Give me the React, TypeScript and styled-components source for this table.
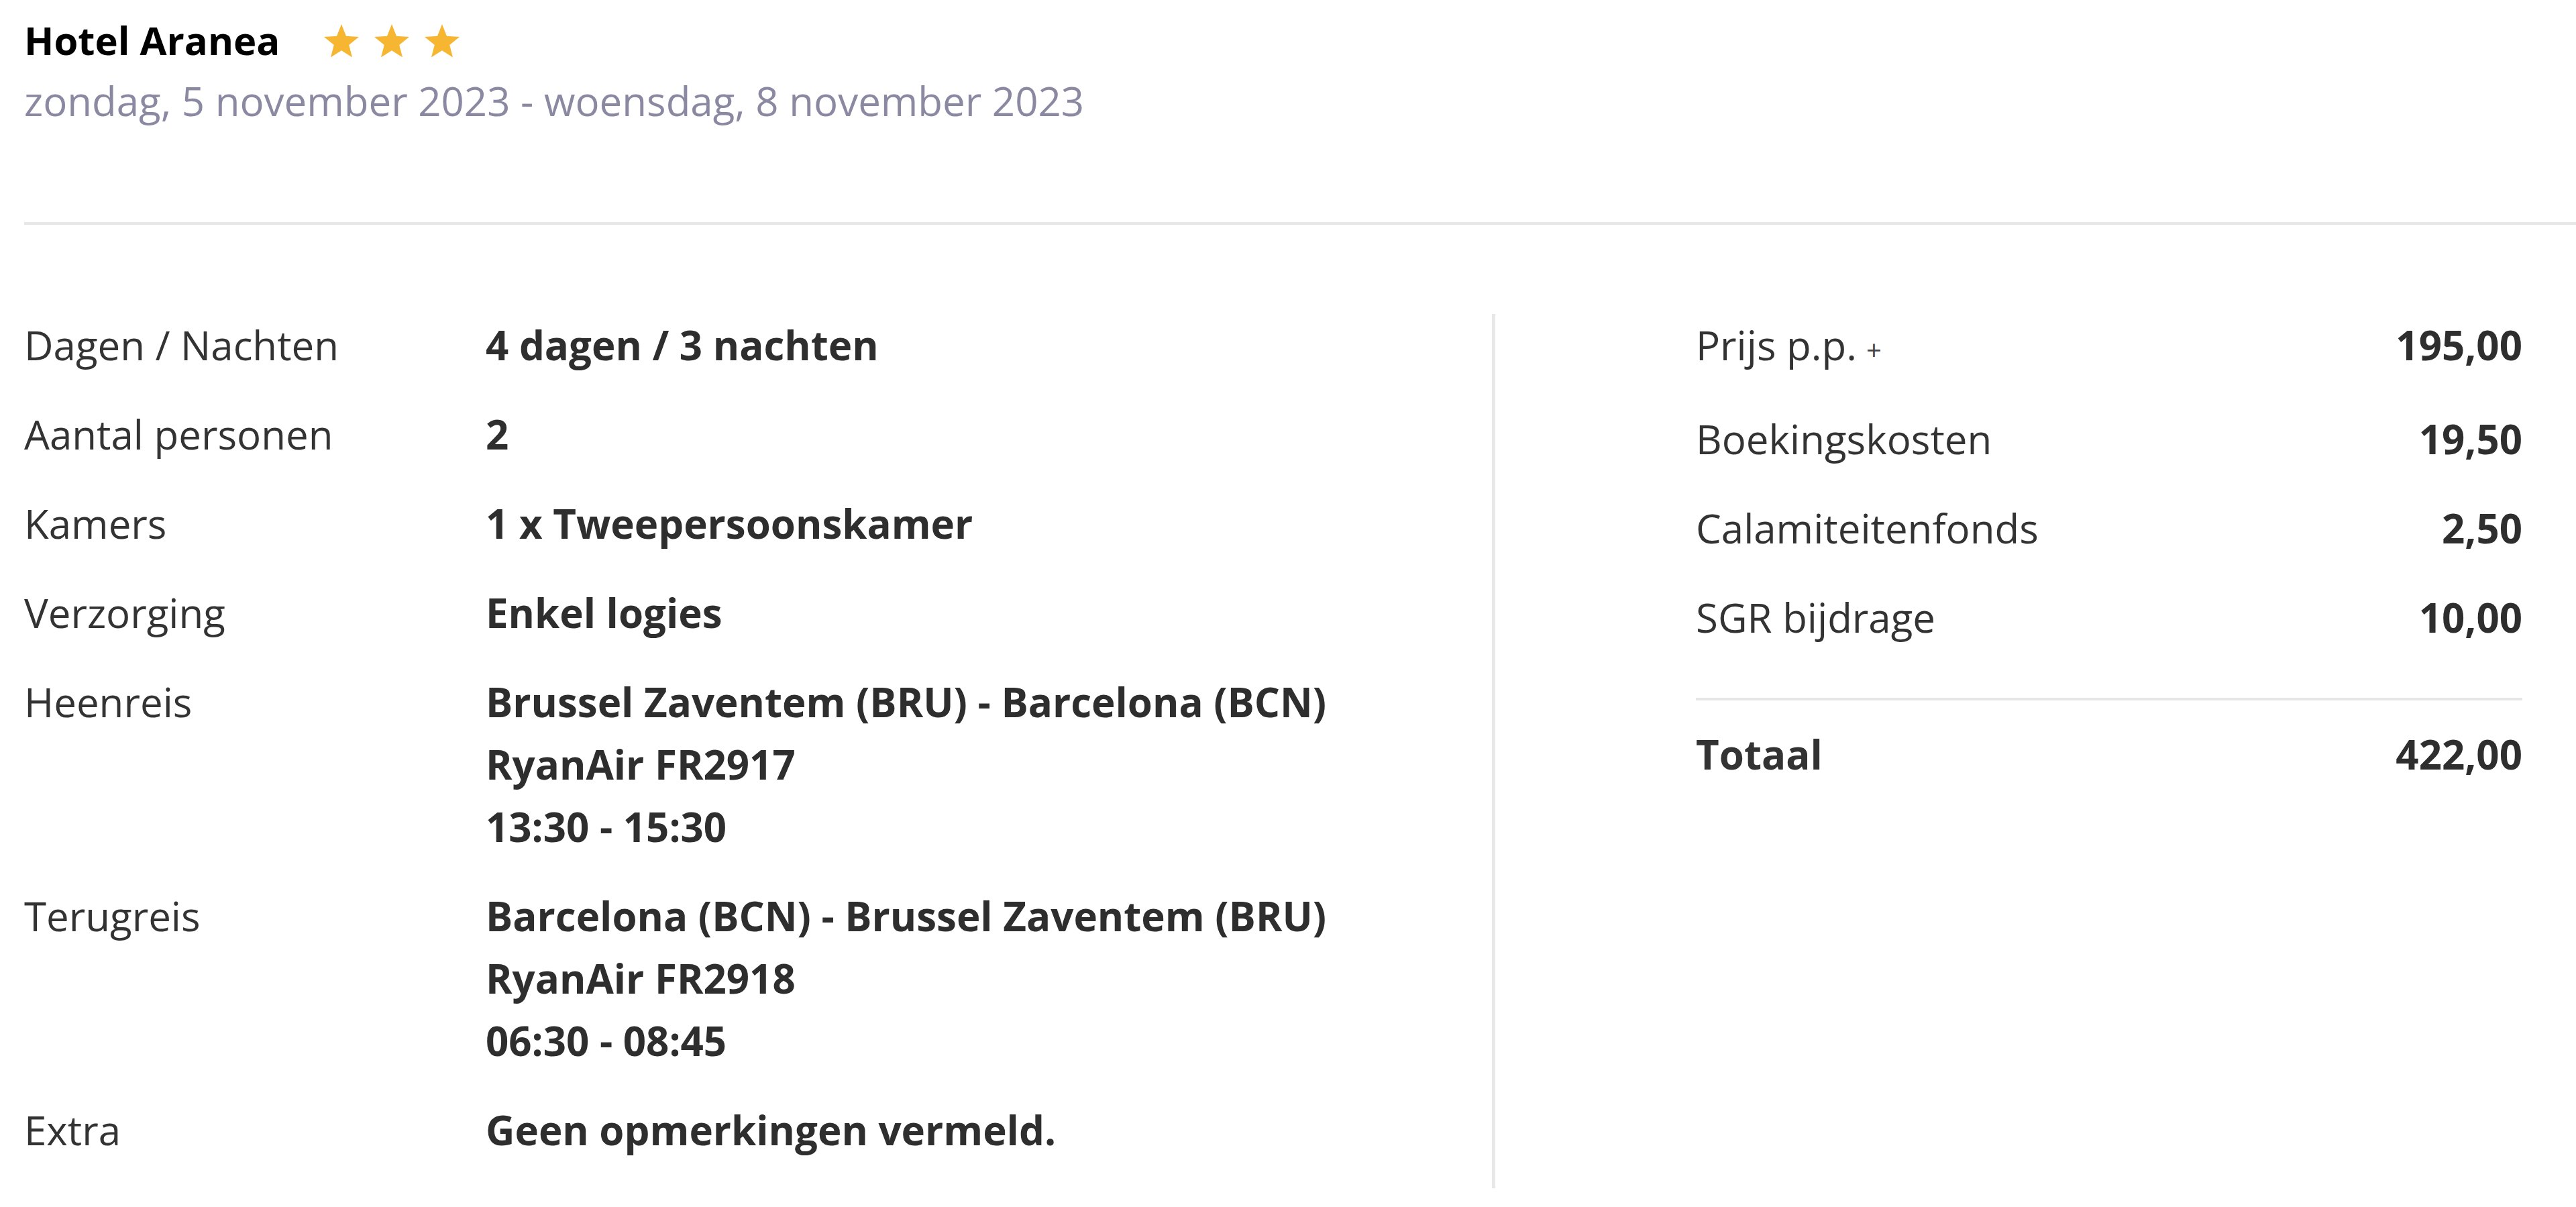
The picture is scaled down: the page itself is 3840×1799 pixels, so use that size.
import React from 'react';
import styled, { createGlobalStyle } from 'styled-components';

const Global = createGlobalStyle`
  html, body { margin: 0; padding: 0; background: #ffffff; }
  body {
    font-family: "Open Sans", "Noto Sans", sans-serif;
    color: #333333;
    -webkit-font-smoothing: antialiased;
  }
`;

const Page = styled.div`
  padding: 15px 0 31px 0;
`;

const Header = styled.header`
  padding-left: 36px;
`;

const TitleRow = styled.div`
  display: flex;
  align-items: center;
`;

const Title = styled.h1`
  margin: 0;
  font-size: 58px;
  line-height: 90px;
  font-weight: 700;
  color: #000000;
`;

const Stars = styled.div`
  display: flex;
  gap: 23px;
  margin-left: 66px;
`;

const StarSvg = styled.svg`
  width: 52px;
  height: 49px;
  display: block;
`;

const DateLine = styled.div`
  font-size: 60px;
  line-height: 90px;
  color: #8b89a1;
`;

const Rule = styled.hr`
  margin: 136px 0 133px 36px;
  border: 0;
  height: 4px;
  background: #e6e6e6;
`;

const Body = styled.div`
  display: grid;
  grid-template-columns: 2193px 1fr;
  margin: 0 80px 0 36px;
`;

const Details = styled.div`
  border-right: 5px solid #e8e8e8;
`;

const DetailRow = styled.div`
  display: grid;
  grid-template-columns: 688px 1fr;
  padding-bottom: 40px;
  font-size: 60px;
  line-height: 93px;
`;

const Label = styled.div`
  font-weight: 400;
  color: #333333;
`;

const Value = styled.div`
  font-weight: 700;
  color: #2e2e2e;
`;

const Summary = styled.div`
  padding-left: 299px;
`;

const PriceRow = styled.div<{ $total?: boolean }>`
  display: flex;
  justify-content: space-between;
  align-items: baseline;
  font-size: 60px;
  line-height: 93px;
  margin-bottom: 40px;
  font-weight: ${(p) => (p.$total ? 700 : 400)};
  color: #333333;
  &:last-of-type { margin-bottom: 0; }
`;

const Amount = styled.span`
  font-weight: 700;
  color: #2e2e2e;
`;

const Plus = styled.span`
  font-size: 40px;
  margin-left: 14px;
  color: #444444;
`;

const TotalRule = styled.hr`
  margin: 73px 0 34px 0;
  border: 0;
  height: 4px;
  background: #e6e6e6;
`;

const starPoints = (() => {
  const cx = 26;
  const cy = 27.4;
  const R = 27.3;
  const r = 11.8;
  const pts: string[] = [];
  for (let i = 0; i < 10; i++) {
    const a = (-90 + i * 36) * (Math.PI / 180);
    const rad = i % 2 === 0 ? R : r;
    pts.push(`${(cx + rad * Math.cos(a)).toFixed(2)},${(cy + rad * Math.sin(a)).toFixed(2)}`);
  }
  return pts.join(' ');
})();

const Star = () => (
  <StarSvg viewBox="0 0 52 49">
    <polygon points={starPoints} fill="#f6b631" />
  </StarSvg>
);

const details: { label: string; lines: string[] }[] = [
  { label: 'Dagen / Nachten', lines: ['4 dagen / 3 nachten'] },
  { label: 'Aantal personen', lines: ['2'] },
  { label: 'Kamers', lines: ['1 x Tweepersoonskamer'] },
  { label: 'Verzorging', lines: ['Enkel logies'] },
  {
    label: 'Heenreis',
    lines: ['Brussel Zaventem (BRU) - Barcelona (BCN)', 'RyanAir FR2917', '13:30 - 15:30'],
  },
  {
    label: 'Terugreis',
    lines: ['Barcelona (BCN) - Brussel Zaventem (BRU)', 'RyanAir FR2918', '06:30 - 08:45'],
  },
  { label: 'Extra', lines: ['Geen opmerkingen vermeld.'] },
];

const prices = [
  { label: 'Prijs p.p.', plus: true, amount: '195,00' },
  { label: 'Boekingskosten', amount: '19,50' },
  { label: 'Calamiteitenfonds', amount: '2,50' },
  { label: 'SGR bijdrage', amount: '10,00' },
];

export default function App() {
  return (
    <Page>
      <Global />
      <Header>
        <TitleRow>
          <Title>Hotel Aranea</Title>
          <Stars>
            <Star />
            <Star />
            <Star />
          </Stars>
        </TitleRow>
        <DateLine>zondag, 5 november 2023 - woensdag, 8 november 2023</DateLine>
      </Header>
      <Rule />
      <Body>
        <Details>
          {details.map((d) => (
            <DetailRow key={d.label}>
              <Label>{d.label}</Label>
              <Value>
                {d.lines.map((l) => (
                  <div key={l}>{l}</div>
                ))}
              </Value>
            </DetailRow>
          ))}
        </Details>
        <Summary>
          <div>
            {prices.map((p) => (
              <PriceRow key={p.label}>
                <span>
                  {p.label}
                  {p.plus && <Plus>+</Plus>}
                </span>
                <Amount>{p.amount}</Amount>
              </PriceRow>
            ))}
          </div>
          <TotalRule />
          <PriceRow $total>
            <span>Totaal</span>
            <Amount>422,00</Amount>
          </PriceRow>
        </Summary>
      </Body>
    </Page>
  );
}
